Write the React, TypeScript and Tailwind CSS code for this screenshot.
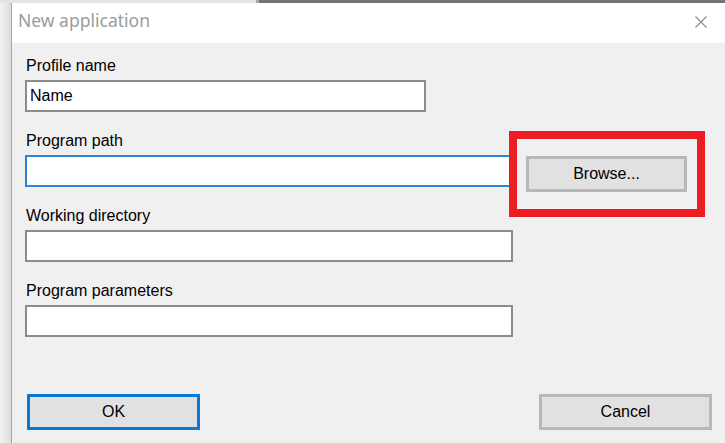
import React from "react";

const labelCls = "pl-px text-[16px] leading-[18px] text-black";
const inputCls =
  "block h-[32px] border-2 bg-white px-[3px] text-[16px] leading-[18px] text-black outline-none";

function CloseIcon() {
  return (
    <svg width="12" height="12" viewBox="0 0 12 12" className="block">
      <path d="M0.5 0.5 L11.5 11.5 M11.5 0.5 L0.5 11.5" stroke="#8a8a8a" strokeWidth="1.1" fill="none" />
    </svg>
  );
}

function Field({ label, value, width, focused }: { label: string; value?: string; width: string; focused?: boolean }) {
  return (
    <div>
      <div className={labelCls}>{label}</div>
      <input
        readOnly
        value={value ?? ""}
        className={`${inputCls} ${width} mt-[5px] ${focused ? "border-[#2c84d6]" : "border-[#8c8c8c]"}`}
      />
    </div>
  );
}

export default function App() {
  return (
    <div
      className="flex h-[443px] w-[725px] flex-col overflow-hidden bg-[#f0f0f0]"
      style={{ fontFamily: '"Liberation Sans", Arial, sans-serif' }}
    >
      {/* windows behind the dialog */}
      <div className="flex h-[3px] shrink-0">
        <div className="w-[256px] bg-[#e4e4e4]" />
        <div className="w-[3px] bg-[#a8a8a8]" />
        <div className="flex-1 bg-[#747474]" />
      </div>

      <div className="flex min-h-0 flex-1">
        <div className="w-[11px] bg-gradient-to-r from-[#f4f4f4] to-[#dcdcdc]" />
        <div className="w-px bg-[#a6a6a6]" />

        <div className="flex min-w-0 flex-1 flex-col">
          <div className="flex h-[40px] shrink-0 items-start justify-between bg-white pl-[6px] pr-[18px]">
            <span
              className="mt-[5px] text-[17.5px] leading-[24px] text-[#9b9b9b]"
              style={{ fontFamily: '"Noto Sans", "Open Sans", sans-serif' }}
            >
              New application
            </span>
            <div className="mt-[13px]">
              <CloseIcon />
            </div>
          </div>

          <div className="flex flex-1 flex-col pl-[13px] pt-[14px]">
            <Field label="Profile name" value="Name" width="w-[401px]" />

            <div className="mt-[20px]">
              <div className={labelCls}>Program path</div>
              <div className="mt-[5px] flex h-[32px] items-start">
                <input readOnly value="" className={`${inputCls} w-[486px] border-[#2c84d6]`} />
                <div className="relative ml-[15px] mt-px">
                  <button
                    type="button"
                    className="h-[36px] w-[161px] border-[3px] border-[#b8b8b8] bg-[#e1e1e1] text-[16px] text-black"
                  >
                    Browse...
                  </button>
                  <span className="pointer-events-none absolute -bottom-[25px] -left-[17px] -right-[18px] -top-[25px] border-[8px] border-[#ee1d23]" />
                </div>
              </div>
            </div>

            <div className="mt-[20px]">
              <Field label="Working directory" width="w-[488px]" />
            </div>

            <div className="mt-[20px]">
              <Field label="Program parameters" width="w-[488px]" />
            </div>

            <div className="mt-[57px] flex justify-between pl-[2px] pr-[13px]">
              <button
                type="button"
                className="h-[36px] w-[173px] border-[3px] border-[#0a78d7] bg-[#e1e1e1] text-[16px] text-black"
              >
                OK
              </button>
              <button
                type="button"
                className="h-[36px] w-[173px] border-[3px] border-[#b8b8b8] bg-[#e1e1e1] text-[16px] text-black"
              >
                Cancel
              </button>
            </div>
          </div>
        </div>
      </div>
    </div>
  );
}
